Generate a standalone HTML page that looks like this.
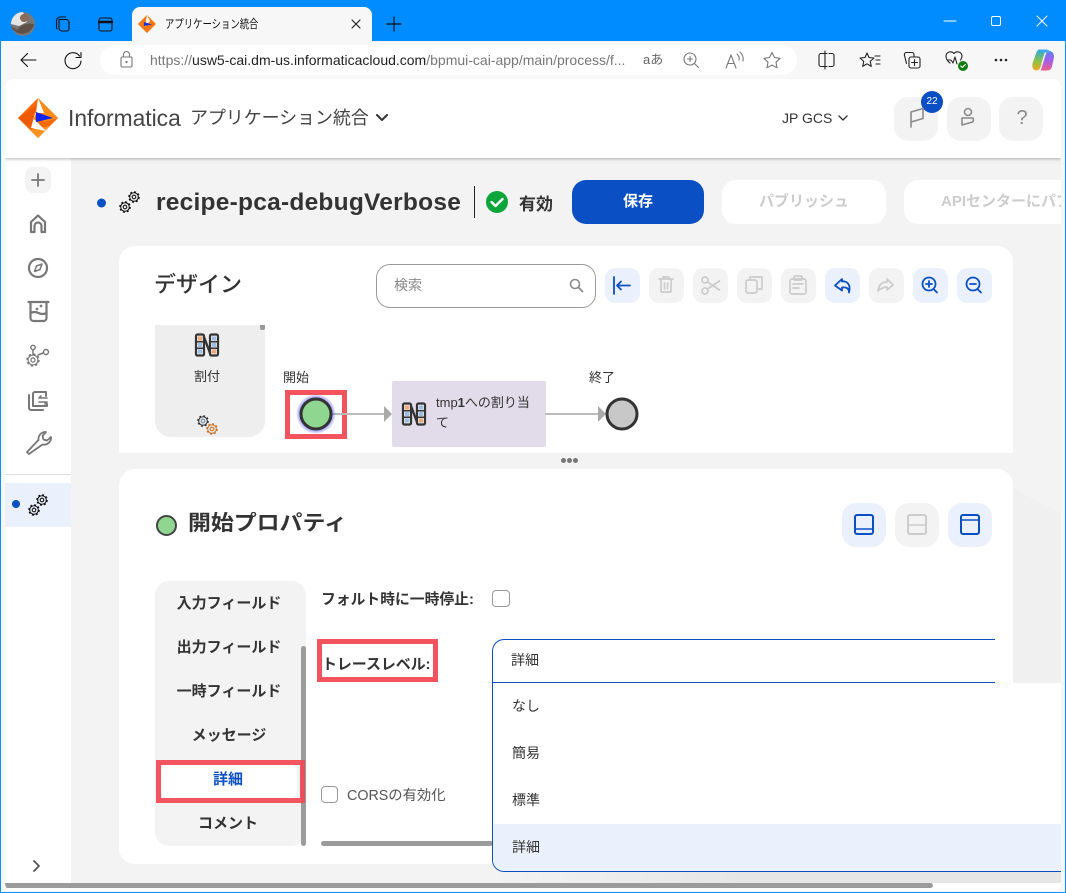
<!DOCTYPE html>
<html lang="ja"><head><meta charset="utf-8"><title>アプリケーション統合</title>
<style>
html,body{margin:0;padding:0;width:1066px;height:893px;overflow:hidden;background:#0a8fff}
body{position:relative;font-family:"Liberation Sans","Noto Sans CJK JP",sans-serif;color:#333}
.a{position:absolute}
.t{position:absolute;white-space:nowrap;line-height:20px;transform-origin:left center}
.c{text-align:center}
.b{font-weight:700}
svg{position:absolute;left:0;top:0}
.tb{position:absolute;top:268px;width:35px;height:35px;border-radius:10px;background:#f3f3f3}
.tb.on{background:#ebf1fc}
.li{position:absolute;left:155px;width:148px;text-align:center;font-weight:700;font-size:15px;line-height:20px;color:#333}
</style></head><body>
<div class="a" style="left:0;top:0;width:1066px;height:41px;background:#008cff"></div>
<div class="a" style="left:1px;top:41px;width:1064px;height:851px;background:#f7f7f7"></div>
<div class="a" style="left:132px;top:7px;width:240px;height:34px;background:#f7f7f7;border-radius:8px 8px 0 0"></div>
<div class="a" style="left:100px;top:45px;width:697px;height:30px;background:#fff;border-radius:15px"></div>
<div class="t" style="left:165px;top:14px;font-size:12px;color:#111;transform:scaleX(.78)">アプリケーション統合</div>
<div class="t" style="left:150px;top:51px;font-size:14px;line-height:18px;color:#777;width:476px;overflow:hidden">https://<span style="color:#222">usw5-cai.dm-us.informaticacloud.com</span>/bpmui-cai-app/main/process/f...</div>
<div class="t" style="left:643px;top:50px;font-size:13px;color:#666">aあ</div>

<div class="a" style="left:5px;top:79px;width:1056px;height:812px;background:#f3f3f3;border-radius:8px;overflow:hidden;isolation:isolate">
 <div class="a" style="left:1008px;top:374px;width:48px;height:230px;background:#f0f0f0;clip-path:polygon(0 35px,100% 61px,100% 100%,0 100%)"></div>
 <div class="a" style="left:487px;top:785px;width:569px;height:19px;background:linear-gradient(90deg,#f3f3f3,#e6e6e6 45%,#e6e6e6)"></div>
 <div class="a" style="left:0;top:0;width:1056px;height:79px;background:#fff;box-shadow:0 1px 3px rgba(0,0,0,.3);z-index:3"></div>
 <div class="a" style="left:0;top:79px;width:66px;height:725px;background:#fff;z-index:2"></div>
 <div class="a" style="left:0;top:804px;width:1056px;height:8px;background:#fff;z-index:4"></div>
 <div class="a" style="left:0;top:804px;width:928px;height:5px;background:#9b9b9b;border-radius:0 3px 3px 0;z-index:4"></div>
</div>
<div class="a" style="left:5px;top:474px;width:66px;height:1px;background:#ddd"></div>
<div class="a" style="left:5px;top:483px;width:66px;height:44px;background:#ebf1fc"></div>
<div class="a" style="left:25px;top:167px;width:26px;height:26px;background:#f3f3f3;border-radius:8px"></div>

<div class="t" style="left:68px;top:106px;font-size:22.8px;line-height:24px;color:#444">Informatica</div>
<div class="t" style="left:190px;top:107px;font-size:18px;line-height:22px;color:#444;letter-spacing:-.1px">アプリケーション統合</div>
<div class="t" style="left:782px;top:108px;font-size:14px;color:#333">JP GCS</div>
<div class="a" style="left:894px;top:97px;width:44px;height:44px;border-radius:14px;background:#f3f3f3"></div>
<div class="a" style="left:947px;top:97px;width:44px;height:44px;border-radius:14px;background:#f3f3f3"></div>
<div class="a" style="left:999px;top:97px;width:44px;height:44px;border-radius:14px;background:#f3f3f3"></div>
<div class="a" style="left:921px;top:91px;width:22px;height:22px;border-radius:50%;background:#0b4fc4"></div>
<div class="t c" style="left:921px;top:92px;width:22px;font-size:10px;color:#fff">22</div>
<div class="t" style="left:1015px;top:108px;font-size:20px;color:#8a8a8a;width:14px;text-align:center">?</div>

<div class="t b" style="left:156px;top:189px;font-size:24.5px;line-height:28px;color:#333;letter-spacing:.24px">recipe-pca-debugVerbose</div>
<div class="a" style="left:474px;top:186px;width:1px;height:32px;background:#222"></div>
<div class="t b" style="left:519px;top:195px;font-size:17px;color:#333">有効</div>
<div class="a" style="left:572px;top:180px;width:132px;height:44px;border-radius:14px;background:#0b4fc4"></div>
<div class="t c b" style="left:572px;top:192px;width:132px;font-size:15px;color:#fff">保存</div>
<div class="a" style="left:722px;top:180px;width:164px;height:44px;border-radius:14px;background:#fff"></div>
<div class="t c b" style="left:722px;top:192px;width:164px;font-size:15px;color:#ccc">パブリッシュ</div>
<div class="a" style="left:904px;top:180px;width:157px;height:44px;border-radius:14px 0 0 14px;background:#fff;overflow:hidden"><div class="t b" style="left:37px;top:12px;font-size:15px;color:#ccc">APIセンターにパブリッシュ</div></div>

<div class="a" style="left:119px;top:246px;width:894px;height:207px;border-radius:16px 16px 0 0;background:#fff"></div>
<div class="a" style="left:119px;top:469px;width:894px;height:395px;border-radius:16px;background:#fff"></div>

<div class="t" style="left:154px;top:273px;font-size:22px;line-height:24px;color:#333;font-weight:500">デザイン</div>
<div class="a" style="left:376px;top:264px;width:218px;height:42px;border:1px solid #999;border-radius:14px;background:#fff"></div>
<div class="t" style="left:394px;top:275px;font-size:14px;color:#888">検索</div>
<div class="tb on" style="left:605px"></div><div class="tb" style="left:649px"></div><div class="tb" style="left:693px"></div><div class="tb" style="left:737px"></div><div class="tb" style="left:781px"></div><div class="tb on" style="left:825px"></div><div class="tb" style="left:869px"></div><div class="tb on" style="left:913px"></div><div class="tb on" style="left:957px"></div>

<div class="a" style="left:155px;top:325px;width:110px;height:112px;background:#eee;border-radius:0 0 16px 16px"></div>
<div class="a" style="left:260px;top:325px;width:5px;height:5px;background:#999;border-radius:0 0 2px 2px"></div>
<div class="t" style="left:194px;top:367px;font-size:13px;color:#333">割付</div>
<div class="t" style="left:283px;top:368px;font-size:13px;color:#333">開始</div>
<div class="t" style="left:589px;top:368px;font-size:13px;color:#333">終了</div>
<div class="a" style="left:285px;top:390px;width:52px;height:39px;border:5px solid #f2535d"></div>
<div class="a" style="left:392px;top:381px;width:154px;height:66px;background:#e2dcea;border-radius:2px"></div>
<div class="t" style="left:436px;top:393px;font-size:13px;color:#333">tmp<b>1</b>への割り当</div>
<div class="t" style="left:436px;top:413px;font-size:13px;color:#333">て</div>
<div class="a" style="left:561px;top:458px;width:5px;height:5px;border-radius:50%;background:#777"></div>
<div class="a" style="left:567px;top:458px;width:5px;height:5px;border-radius:50%;background:#777"></div>
<div class="a" style="left:573px;top:458px;width:5px;height:5px;border-radius:50%;background:#777"></div>

<div class="a" style="left:156px;top:515px;width:17px;height:17px;border-radius:50%;background:#8fd690;border:2px solid #444"></div>
<div class="t b" style="left:188px;top:512px;font-size:21px;line-height:24px;color:#333;transform:scaleX(1.09)">開始プロパティ</div>
<div class="a" style="left:842px;top:503px;width:44px;height:44px;border-radius:14px;background:#ebf1fc"></div>
<div class="a" style="left:895px;top:503px;width:44px;height:44px;border-radius:14px;background:#f3f3f3"></div>
<div class="a" style="left:948px;top:503px;width:44px;height:44px;border-radius:14px;background:#ebf1fc"></div>

<div class="a" style="left:155px;top:581px;width:151px;height:265px;background:#f3f3f3;border-radius:14px"></div>
<div class="a" style="left:301px;top:646px;width:5px;height:200px;background:#9b9b9b;border-radius:3px"></div>
<div class="li" style="top:594px">入力フィールド</div>
<div class="li" style="top:638px">出力フィールド</div>
<div class="li" style="top:682px">一時フィールド</div>
<div class="li" style="top:726px">メッセージ</div>
<div class="a" style="left:161px;top:765px;width:136px;height:33px;background:#fff;border-radius:6px"></div>
<div class="li" style="top:770px;color:#0b4fc4;left:154px">詳細</div>
<div class="li" style="top:814px;left:154px">コメント</div>
<div class="a" style="left:156px;top:760px;width:139px;height:33px;border:5px solid rgba(242,71,84,.92)"></div>

<div class="t b" style="left:321px;top:590px;font-size:14.8px;color:#333">フォルト時に一時停止:</div>
<div class="a" style="left:492px;top:590px;width:16px;height:15px;border:1px solid #999;border-radius:4px;background:#fff"></div>
<div class="a" style="left:317px;top:639px;width:111px;height:33px;border:5px solid #f2535d"></div>
<div class="t b" style="left:322px;top:655px;font-size:15px;color:#333;letter-spacing:-.1px">トレースレベル:</div>
<div class="a" style="left:321px;top:786px;width:15px;height:15px;border:1px solid #999;border-radius:4px;background:#fff"></div>
<div class="t" style="left:347px;top:786px;font-size:14.3px;color:#555">CORSの有効化</div>
<div class="a" style="left:321px;top:841px;width:172px;height:5px;background:#9b9b9b;border-radius:3px"></div>

<div class="a" style="left:492px;top:639px;width:503px;border-top:1px solid #0b4fc4;border-bottom:1px solid #0b4fc4;border-left:1px solid #0b4fc4;border-radius:12px 0 0 0;background:#fff;box-sizing:border-box;height:44px"></div>
<div class="t" style="left:511px;top:650px;font-size:14px;color:#333">詳細</div>
<div class="a" style="left:492px;top:683px;width:569px;height:189px;background:#fff;border-left:1px solid #0b4fc4;border-bottom:1px solid #0b4fc4;border-radius:0 0 0 12px;box-sizing:border-box;overflow:hidden"><div class="a" style="left:0;top:141px;width:569px;height:47px;background:#ebf1fc"></div></div>
<div class="t" style="left:512px;top:696px;font-size:14px;color:#333">なし</div>
<div class="t" style="left:512px;top:743px;font-size:14px;color:#333">簡易</div>
<div class="t" style="left:512px;top:790px;font-size:14px;color:#333">標準</div>
<div class="t" style="left:512px;top:837px;font-size:14px;color:#333">詳細</div>

<svg width="1066" height="893" viewBox="0 0 1066 893" fill="none" stroke-linecap="round" stroke-linejoin="round">
<defs>
 <radialGradient id="gl"><stop offset=".7" stop-color="#3a3af0" stop-opacity=".8"/><stop offset="1" stop-color="#3a3af0" stop-opacity="0"/></radialGradient>
 <linearGradient id="cp" x1="0" y1="0" x2="0" y2="1"><stop offset="0" stop-color="#2aa8e0"/><stop offset=".55" stop-color="#8bc34a"/><stop offset="1" stop-color="#f5a623"/></linearGradient>
 <linearGradient id="cq" x1="0" y1="0" x2="0" y2="1"><stop offset="0" stop-color="#5f7ff0"/><stop offset=".5" stop-color="#a45fe8"/><stop offset="1" stop-color="#ee5d8c"/></linearGradient>
 <g id="g"><circle r="1.800" stroke="currentColor" stroke-width="1.100"/><circle r="4.300" stroke="currentColor" stroke-width="1"/><circle r="5.100" stroke="currentColor" stroke-width="1.400" stroke-dasharray="2 2" stroke-linecap="butt"/></g>
 <g id="n">
  <rect x="-11" y="-10.500" width="8" height="21" rx="1.500" stroke="#333" stroke-width="2.200" fill="#eee"/><rect x="3" y="-10.500" width="8" height="21" rx="1.500" stroke="#333" stroke-width="2.200" fill="#eee"/>
  <rect x="-9" y="-8.500" width="4" height="4" fill="#f0a875"/><rect x="-9" y="-2" width="4" height="4" fill="#9dbde6"/><rect x="-9" y="4.500" width="4" height="4" fill="#9dbde6"/>
  <rect x="5" y="-8.500" width="4" height="4" fill="#9dbde6"/><rect x="5" y="-2" width="4" height="4" fill="#9dbde6"/><rect x="5" y="4.500" width="4" height="4" fill="#f0a875"/>
  <path d="M-11-3.200H-3M-11 3.200H-3M3-3.200H11M3 3.200H11" stroke="#333" stroke-width="1.500"/><path d="M-3-8L3 8" stroke="#333" stroke-width="2.400"/>
 </g>
</defs>

<!-- browser chrome -->
<circle cx="23" cy="24" r="12" fill="#777"/><path d="M11 24a12 12 0 0 1 12-12l4 10-8 4z" fill="#e6e6e6"/><path d="M17 30q6-8 17-6a12 12 0 0 1-23 2z" fill="#5f5048"/><circle cx="24" cy="18" r="4" fill="#8b6a58"/>
<g stroke="#111" stroke-width="1.100"><path d="M59 19.500h7a3 3 0 0 1 3 3v6.500a2 2 0 0 1-2 2h-5a3 3 0 0 1-3-3z"/><path d="M56.500 27v-6a4 4 0 0 1 4-4h5M57 29l-.5-2"/><rect x="99" y="18" width="13" height="13" rx="2"/></g><path d="M99 22h13" stroke="#111" stroke-width="2.400"/>
<polygon points="147,15 156,24 147,33 138,24" fill="#f7760f"/><polygon points="147,15 150,21 145,27" fill="#fff"/><polygon points="144,22 152,24.500 144,26" fill="#1530e0"/>
<path d="M352 20l8 8m0-8l-8 8" stroke="#222" stroke-width="1.200"/><path d="M394 17v14M387 24h14" stroke="#111" stroke-width="1.200"/>
<path d="M21 60h15M21 60l6.500-6.500M21 60l6.500 6.500" stroke="#111" stroke-width="1.100"/>
<path d="M79.500 56a8 8 0 1 0 1.500 5M81 52.500v5h-5" stroke="#111" stroke-width="1.100"/>
<g stroke="#777" stroke-width="1.100"><rect x="121" y="57" width="11" height="10" rx="1.500"/><path d="M123.500 57v-2.500a3 3 0 0 1 6 0V57"/><circle cx="126.500" cy="62" r=".6"/>
<circle cx="690" cy="59" r="6"/><path d="M694.500 63.500l4 4M690 56.500v5M687.500 59h5"/>
<path d="M726 68l5-13 5 13M728 63.500h6M737 54q3 3 2 6M740 52q4 4 3 9"/>
<path d="M772 52.500l2.500 5 5.500.8-4 3.900 1 5.500-5-2.600-5 2.600 1-5.500-4-3.900 5.500-.8z"/></g>
<g stroke="#222" stroke-width="1.100"><path d="M827 53.500h-6a2 2 0 0 0-2 2v9a2 2 0 0 0 2 2h6M829 53.500h3a2 2 0 0 1 2 2v9a2 2 0 0 1-2 2h-3M825 51v18"/>
<path d="M867 53l2 4.500 5 .5-3.800 3.400 1.100 5-4.300-2.600-4.300 2.600 1.100-5L860 58l5-.5zM875 56h5M876 60h4M876 64h4"/>
<path d="M906 52.500h6a2 2 0 0 1 2 2V57M906 52.500q-2 .5-1.500 3l2 8"/><rect x="909" y="57" width="11" height="11" rx="2"/><path d="M914.500 59.500v6M911.500 62.500h6"/>
<path d="M950 63q-4-3-4-7a4.500 4.500 0 0 1 8-2.500 4.500 4.500 0 0 1 8 2.500q0 2-1.500 4M947 60h4l2 3 2-6 2 7"/></g>
<circle cx="963" cy="66" r="5" fill="#107c10"/><path d="M960.800 66l1.500 1.500 3-3" stroke="#fff" stroke-width="1.100"/>
<g fill="#222"><circle cx="996" cy="60" r="1.300"/><circle cx="1001" cy="60" r="1.300"/><circle cx="1006" cy="60" r="1.300"/></g>
<path d="M1041 49.500q-4 0-5 4l-3.500 10q-1 6 3.500 7 3.500 0 4.500-3.500l5-17.500z" fill="url(#cp)"/><path d="M1047 70.500q4 0 5-4l1.800-8q1-6-3.500-7.500-3.500 0-4.500 3l-5 16.500z" fill="url(#cq)"/><path d="M1037 49.500h9q3 0 5 3h-9q-3-3-5-3z" fill="#3fa7ec"/>
<path d="M944 21h12" stroke="#fff" stroke-width="1"/><rect x="991.500" y="16.500" width="9" height="9" rx="1.500" stroke="#fff"/><path d="M1037 16l10 10m0-10l-10 10" stroke="#fff"/>

<!-- logo -->
<polygon points="38,98 58,118 38,138 18,118" fill="#f46a06"/><polygon points="38,98 58,118 44,122" fill="#f98a18"/><polygon points="18,118 36,106 33,130" fill="#ee5a05"/><polygon points="30,130 50,126 38,138" fill="#fc9320"/><polygon points="38,98 44,113 35,113 31,128 46,131 34,119 36,113" fill="#fff"/><polygon points="36,112 53,118 36,122" fill="#1022ef"/>
<path d="M377 115l5 5 5-5" stroke="#333" stroke-width="2"/><path d="M839 116l4 4 4-4" stroke="#333" stroke-width="1.300"/>
<g stroke="#8a8a8a" stroke-width="1.600"><path d="M911 127v-15l12-3.500v10l-12 3.500"/><circle cx="968" cy="112" r="3.500"/><path d="M962 118h11q1 3-.5 4l-10.500 3z"/></g>

<!-- sidebar -->
<path d="M38 174v12M32 180h12" stroke="#777" stroke-width="1.800"/>
<g stroke="#777" stroke-width="2.200"><path d="M31 232v-10l7-6.500 7 6.500v10h-3.500v-6a3.500 3.500 0 0 0-7 0v6z"/><circle cx="38" cy="268" r="9"/><path d="M42 264l-2 5.500-5.500 2 2-5.500z" stroke-width="1.500"/>
<path d="M28.500 302h20M30.500 302v16a3 3 0 0 0 3 3h10a3 3 0 0 0 3-3v-16M30.500 313q4-2 8 0t8 0" stroke-width="2.200"/><circle cx="41" cy="306" r=".8" stroke-width="1.200"/><circle cx="37" cy="309" r=".8" stroke-width="1.200"/>
<path d="M33 350v4M38 355l5-2" stroke-width="1.500"/><circle cx="33" cy="347.500" r="2.200" stroke-width="1.400"/><circle cx="46" cy="352" r="2.500" stroke-width="1.400"/>
<path d="M29 395v13a2 2 0 0 0 2 2h12M33 406v-12a2 2 0 0 1 2-2h11v4M33 406h14v-2" stroke-width="2"/><path d="M47 398h-8l2-2M39 402h8l-2 2" stroke-width="1.600"/>
<path d="M29 454l-2-2 11.500-12a7 7 0 0 1 7.500-8l-3.500 4 1 3.500 3.500 1 4-3.500a7 7 0 0 1-8.500 7.500z" stroke-width="1.800"/>
<path d="M34 861l5 5-5 5" stroke-width="1.800" stroke="#555"/></g>
<use href="#g" transform="translate(33 360) scale(1.150)" style="color:#777"/>
<circle cx="16" cy="504" r="4" fill="#0b4fc4"/><use href="#g" x="34" y="510" style="color:#111"/><use href="#g" x="42" y="500" style="color:#111"/>

<!-- title -->
<circle cx="101.500" cy="203" r="4.500" fill="#0b4fc4"/><use href="#g" x="125" y="207" style="color:#111"/><use href="#g" x="134" y="197" style="color:#111"/>
<circle cx="497" cy="202" r="11" fill="#0ca53a"/><path d="M491.500 202l4 4 7-7" stroke="#fff" stroke-width="2.400"/>

<!-- toolbar -->
<circle cx="575" cy="284" r="4.500" stroke="#888" stroke-width="1.500"/><path d="M578.500 287.500l4 4" stroke="#888" stroke-width="1.800"/>
<g stroke="#0b4fc4" stroke-width="1.800"><path d="M614 277v17M617 285.500h13M617 285.500l4-4M617 285.500l4 4"/>
<path d="M842 279l-7 6.500 7 5v-3q7-1 7 5 2-8-3-10.500-2-1-4-.500z"/><circle cx="929" cy="284" r="6.500"/><path d="M934 289.500l3 3M929 281v6M926 284h6"/><circle cx="973" cy="284" r="6.500"/><path d="M978 289.500l3 3M970 284h6"/></g>
<g stroke="#ccc" stroke-width="1.700"><path d="M659 279h14M663 279v-2h6v2M661 279v13h10v-13M664.500 283v6M667.500 283v6"/>
<circle cx="705" cy="280" r="3"/><circle cx="705" cy="291" r="3"/><path d="M707.500 282l12 8M707.500 289l12-8"/>
<rect x="746" y="280" width="11" height="13" rx="2"/><path d="M750 280v-3h12v12h-5"/>
<rect x="790" y="279" width="16" height="15" rx="2"/><rect x="794" y="276" width="8" height="4" rx="1"/><path d="M793 284h10M793 288h6"/>
<path d="M893 285l-6-6v3q-8 0-9 9 4-4 9-4v3z"/></g>

<!-- canvas -->
<use href="#n" x="207" y="345"/><use href="#n" x="414" y="414"/>
<use href="#g" x="203" y="421" style="color:#333"/><circle cx="203" cy="421" r="3.500" fill="#cfe0f3" opacity=".5"/><use href="#g" x="212" y="429" style="color:#c8722c"/>
<path d="M332 414h52M546 414h52" stroke="#bbb" stroke-width="2"/>
<polygon points="384,406 392,414 384,422" fill="#aaa"/><polygon points="598,406 606,414 598,422" fill="#aaa"/>
<circle cx="316" cy="414" r="20" fill="url(#gl)"/>
<circle cx="316" cy="414" r="15" fill="#8fd690" stroke="#333" stroke-width="3"/>
<circle cx="622" cy="414" r="15" fill="#c8c8c8" stroke="#333" stroke-width="3"/>

<!-- layout buttons -->
<g stroke="#0b4fc4" stroke-width="2"><rect x="855" y="515" width="18" height="19" rx="2"/><path d="M855 529h18" stroke-width="1.600"/><rect x="961" y="515" width="18" height="19" rx="2"/><path d="M961 520h18" stroke-width="1.600"/></g>
<rect x="908" y="515" width="18" height="19" rx="2" stroke="#ccc" stroke-width="2"/><path d="M908 525h18" stroke="#ccc" stroke-width="1.600"/>
</svg>
</body></html>
